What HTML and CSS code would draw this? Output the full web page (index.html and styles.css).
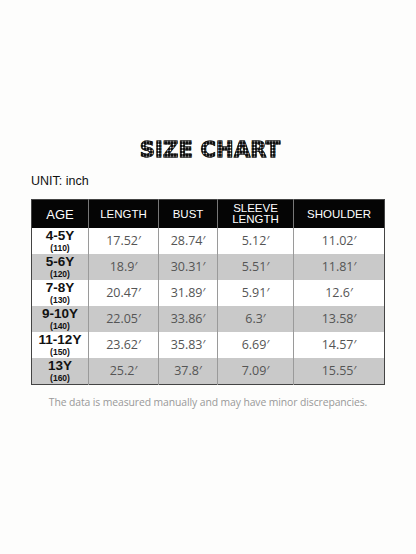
FILE: index.html
```html
<!DOCTYPE html>
<html>
<head>
<meta charset="utf-8">
<link rel="stylesheet" href="styles.css">
</head>
<body>
<div class="page">
  <h1 class="title">SIZE CHART</h1>
  <div class="unit">UNIT: inch</div>
  <table class="chart">
    <colgroup>
      <col class="c1"><col class="c2"><col class="c3"><col class="c4"><col class="c5">
    </colgroup>
    <thead>
      <tr><th class="age-h">AGE</th><th>LENGTH</th><th>BUST</th><th class="two">SLEEVE<br>LENGTH</th><th>SHOULDER</th></tr>
    </thead>
    <tbody>
      <tr><td class="age">4-5Y<span>(110)</span></td><td>17.52′</td><td>28.74′</td><td>5.12′</td><td>11.02′</td></tr>
      <tr class="g"><td class="age">5-6Y<span>(120)</span></td><td>18.9′</td><td>30.31′</td><td>5.51′</td><td>11.81′</td></tr>
      <tr><td class="age">7-8Y<span>(130)</span></td><td>20.47′</td><td>31.89′</td><td>5.91′</td><td>12.6′</td></tr>
      <tr class="g"><td class="age">9-10Y<span>(140)</span></td><td>22.05′</td><td>33.86′</td><td>6.3′</td><td>13.58′</td></tr>
      <tr><td class="age">11-12Y<span>(150)</span></td><td>23.62′</td><td>35.83′</td><td>6.69′</td><td>14.57′</td></tr>
      <tr class="g"><td class="age">13Y<span>(160)</span></td><td>25.2′</td><td>37.8′</td><td>7.09′</td><td>15.55′</td></tr>
    </tbody>
  </table>
  <p class="note">The data is measured manually and may have minor discrepancies.</p>
</div>
</body>
</html>
```
FILE: styles.css
```css
html, body {
  margin: 0;
  padding: 0;
  background: #fdfdfc;
}
.page {
  width: 416px;
  height: 554px;
  padding-top: 137px;
  box-sizing: border-box;
}
.title {
  margin: 0 0 0 4px;
  text-align: center;
  white-space: nowrap;
  font-family: "DejaVu Sans", sans-serif;
  font-weight: 900;
  font-size: 21px;
  line-height: 26px;
  letter-spacing: 0.2px;
  color: transparent;
  background-image: radial-gradient(circle, #fff 0.6px, #111 1.2px);
  background-size: 3px 3px;
  -webkit-background-clip: text;
  background-clip: text;
  -webkit-text-stroke: 0.9px #111;
}
.unit {
  margin: 10px 0 0 31px;
  font-family: "Liberation Sans", Arial, sans-serif;
  font-size: 12.5px;
  line-height: 16px;
  color: #111;
}
.chart {
  margin: 10px 0 0 31px;
  border-collapse: collapse;
  table-layout: fixed;
  width: 353px;
  border: 1px solid #444;
}
.c1 { width: 57px; }
.c2 { width: 70px; }
.c3 { width: 59px; }
.c4 { width: 76px; }
.c5 { width: 91px; }
.chart th {
  background: #050505;
  color: #fff;
  font-family: "Liberation Sans", Arial, sans-serif;
  font-weight: 400;
  font-size: 11.5px;
  height: 28px;
  padding: 0;
  border-left: 1px solid #777;
  text-align: center;
  line-height: 11px;
}
.chart th:first-child { border-left: none; }
.chart th.age-h { font-size: 13px; }
.chart td {
  height: 26px;
  padding: 0;
  text-align: center;
  border-left: 1px solid #9a9a9a;
  font-family: "Open Sans", sans-serif;
  font-size: 12.5px;
  color: #555;
  background: #fff;
  line-height: 14px;
}
.chart td:first-child { border-left: none; }
.chart tr.g td { background: #c9c9c9; }
.chart td.age {
  font-family: "Liberation Sans", Arial, sans-serif;
  font-weight: 700;
  font-size: 13.5px;
  color: #111;
  line-height: 14px;
}
.chart td.age span {
  display: block;
  font-size: 8.5px;
  line-height: 10px;
}
.note {
  margin: 10px 0 0 0;
  text-align: center;
  font-family: "Open Sans", sans-serif;
  font-size: 10.4px;
  color: #999;
  letter-spacing: -0.1px;
}
```
